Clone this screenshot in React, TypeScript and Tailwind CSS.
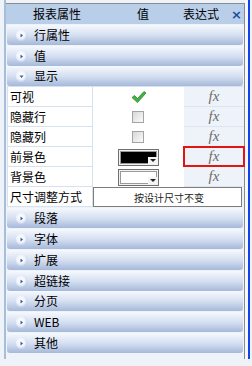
import React from "react";

const cjk = { fontFamily: '"Noto Sans CJK SC", "Noto Sans", sans-serif' };

function Bullet({ open }: { open?: boolean }) {
  return (
    <svg width="13" height="13" viewBox="0 0 13 13">
      <defs>
        <radialGradient id={open ? "bo" : "bc"} cx="45%" cy="40%" r="60%">
          <stop offset="0%" stopColor="#ffffff" />
          <stop offset="60%" stopColor="#eef2fa" />
          <stop offset="100%" stopColor="#b9c9e4" />
        </radialGradient>
      </defs>
      <circle cx="6.5" cy="6.5" r="6" fill={`url(#${open ? "bo" : "bc"})`} />
      {open ? <path d="M4.5 5.5 L8.5 5.5 L6.5 8 Z" fill="#3a5c9a" /> : <path d="M5.5 4.5 L8 6.5 L5.5 8.5 Z" fill="#3a5c9a" />}
    </svg>
  );
}

function SectionBar({ label, open, tight }: { label: string; open?: boolean; tight?: boolean }) {
  return (
    <div
      className={
        tight
          ? "ml-[1px] mr-[1px] flex h-[20px] items-center rounded-[3px] bg-linear-to-b from-[#f6f9fe] via-[#d6e0f1] to-[#a6b9da] pl-[8px]"
          : "mt-[1px] ml-[1px] mr-[1px] flex h-[20px] items-center rounded-[3px] bg-linear-to-b from-[#f6f9fe] via-[#d6e0f1] to-[#a6b9da] pl-[8px]"
      }
    >
      <Bullet open={open} />
      <span className="ml-[6px] text-[12px] leading-none text-black" style={cjk}>
        {label}
      </span>
    </div>
  );
}

function Fx() {
  return <span className="text-[15px] italic leading-none text-[#6e6e6e] [font-family:'Liberation_Serif',serif]">fx</span>;
}

function Checkbox() {
  return <div className="h-[12px] w-[12px] border border-[#a4a4a4] bg-linear-to-br from-[#d8d8d8] to-[#fbfbfb]" />;
}

function ColorPick({ color }: { color: string }) {
  return (
    <div className="relative h-[17px] w-[41px] border border-[#6f6f6f] bg-[#f2f2f2] p-[1px]">
      <div className="h-full w-full border border-[#9a9a9a]" style={{ background: color }} />
      <div className="absolute bottom-[1px] right-[1px] flex h-[7px] w-[9px] items-center justify-center bg-[#f4f4f4]">
        <div className="h-0 w-0 border-x-[3px] border-t-[3px] border-x-transparent border-t-[#222]" />
      </div>
    </div>
  );
}

function PropRow({ label, children, highlight }: { label: string; children?: React.ReactNode; highlight?: boolean }) {
  return (
    <div className="flex h-[20px]">
      <div className="flex w-[86px] items-center border-b border-l border-r border-[#d7e2f0] bg-white pl-[2px] text-[12px] text-black" style={cjk}>
        {label}
      </div>
      <div className="flex w-[91px] items-center bg-white">{children}</div>
      <div className="relative flex flex-1 items-center justify-center border-b border-[#dce5f1] bg-[#eef3fa]">
        <Fx />
        {highlight && <div className="absolute -bottom-[1px] -left-[1px] -right-[1px] -top-[1px] border-2 border-[#e41414]" />}
      </div>
    </div>
  );
}

export default function App() {
  return (
    <div className="flex h-[366px] w-[252px] bg-[#eef3fa]">
      <div className="w-[4px]" />
      <div className="h-[359px] w-[2px] bg-[#a9bcd8]" />
      <div className="flex h-[359px] w-[238px] flex-col pt-[3px]">
        <div className="h-[1px] bg-[#8c8c8c]" />
        <div className="flex h-[20px] items-center bg-[#b9cee8] text-[12px] text-black" style={cjk}>
          <span className="ml-[27px] w-[48px]">报表属性</span>
          <span className="ml-[56px] w-[12px]">值</span>
          <span className="ml-[34px] w-[36px]">表达式</span>
          <span className="ml-[12px] text-[13px] font-bold leading-none text-[#1c4e9c] [font-family:'DejaVu_Sans',sans-serif]">×</span>
        </div>
        <SectionBar label="行属性" />
        <SectionBar label="值" />
        <SectionBar label="显示" open tight />
        <div className="ml-[1px] border-t border-[#d7e2f0]">
          <PropRow label="可视">
            <svg width="16" height="14" viewBox="0 0 16 14" className="ml-[38px]">
              <path d="M1 7.5 L3.5 5.5 L6.5 8.5 L13 1.5 L15 3 L6.5 12.5 Z" fill="#43b043" stroke="#2a8a2a" strokeWidth="0.8" strokeLinejoin="round" />
            </svg>
          </PropRow>
          <PropRow label="隐藏行">
            <div className="ml-[39px]">
              <Checkbox />
            </div>
          </PropRow>
          <PropRow label="隐藏列">
            <div className="ml-[39px]">
              <Checkbox />
            </div>
          </PropRow>
          <PropRow label="前景色" highlight>
            <div className="ml-[25px]">
              <ColorPick color="#000" />
            </div>
          </PropRow>
          <PropRow label="背景色">
            <div className="ml-[25px]">
              <ColorPick color="#fff" />
            </div>
          </PropRow>
          <div className="flex h-[20px]">
            <div className="flex w-[86px] items-center border-b border-l border-r border-[#d7e2f0] bg-white pl-[2px] text-[12px] text-black" style={cjk}>
              尺寸调整方式
            </div>
            <div className="mr-[2px] flex flex-1 items-center border border-[#7d7d7d] bg-white pl-[40px] text-[10px] text-[#222]" style={cjk}>
              按设计尺寸不变
            </div>
          </div>
        </div>
        <SectionBar label="段落" />
        <SectionBar label="字体" />
        <SectionBar label="扩展" />
        <SectionBar label="超链接" />
        <SectionBar label="分页" tight />
        <SectionBar label="WEB" />
        <SectionBar label="其他" />
      </div>
      <div className="mt-[3px] h-[356px] w-[1px] bg-[#8a8a8a]" />
      <div className="h-[359px] w-[3px] bg-[#f6f8fc]" />
      <div className="h-[359px] w-[2px] bg-[#1043f0]" />
    </div>
  );
}
